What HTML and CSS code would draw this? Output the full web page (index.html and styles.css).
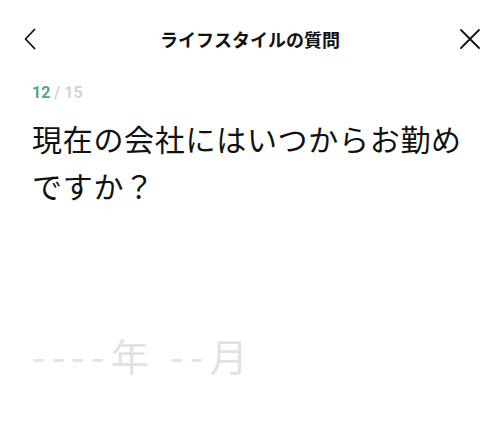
FILE: index.html
```html
<!DOCTYPE html>
<html lang="ja">
<head>
<meta charset="utf-8">
<link rel="stylesheet" href="styles.css">
</head>
<body>
<div class="page">
  <header class="header">
    <button class="icon-btn" aria-label="戻る">
      <svg width="14" height="22" viewBox="0 0 14 22"><path d="M11.5 1.5 L2.5 11 L11.5 20.5" fill="none" stroke="#111" stroke-width="1.8" stroke-linecap="round" stroke-linejoin="round"/></svg>
    </button>
    <h1 class="title">ライフスタイルの質問</h1>
    <button class="icon-btn" aria-label="閉じる">
      <svg width="22" height="22" viewBox="0 0 22 22"><path d="M2 2 L20 20 M20 2 L2 20" fill="none" stroke="#111" stroke-width="1.8" stroke-linecap="round"/></svg>
    </button>
  </header>
  <main class="content">
    <div class="progress"><span class="current">12</span><span class="total"> / 15</span></div>
    <p class="question">現在の会社にはいつからお勤めですか？</p>
    <div class="answer">----年 --月</div>
  </main>
</div>
</body>
</html>
```
FILE: styles.css
```css
* { box-sizing: border-box; }
html, body { margin: 0; padding: 0; background: #fff; }
body { font-family: "Noto Sans CJK JP", "Noto Sans", sans-serif; color: #111; }
.page { width: 500px; }
.header {
  height: 78px;
  display: flex;
  align-items: center;
  justify-content: space-between;
  padding: 0 18px 0 18px;
}
.icon-btn {
  width: 24px; height: 24px;
  border: 0; background: none; padding: 0;
  display: flex; align-items: center; justify-content: center;
}
.title {
  margin: 0;
  font-size: 18px;
  font-weight: 700;
  letter-spacing: 0;
}
.content { padding: 0 32px; }
.progress {
  font-family: Roboto, "Noto Sans", sans-serif;
  font-weight: 700;
  font-size: 16px;
  line-height: 20px;
  margin-top: 5px;
}
.current { color: #4fa77a; }
.total { color: #d4d4d4; }
.question {
  margin: 12px 0 0;
  font-size: 30px;
  line-height: 47px;
  letter-spacing: 0.7px;
  font-weight: 400;
}
.answer {
  margin-top: 121px;
  font-size: 38px;
  line-height: 50px;
  letter-spacing: 6.5px;
  color: #e2e2e2;
}
```
